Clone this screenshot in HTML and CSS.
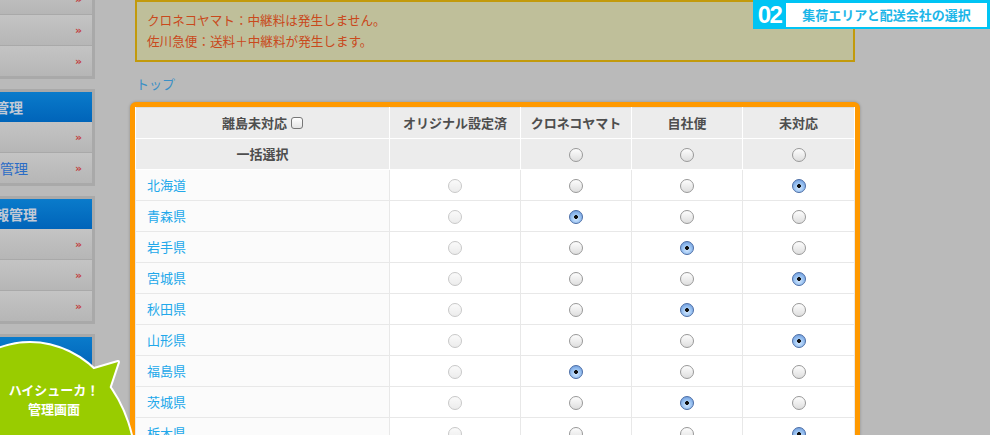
FILE: index.html
```html
<!DOCTYPE html>
<html lang="ja">

<head>
    <meta charset="UTF-8">
    <meta name="viewport" content="width=device-width, initial-scale=1.0">
    <title>配送設定</title>
    <link rel="stylesheet" href="styles.css">
</head>

<body>
    <div id="wrap">
        <div id="side">
            <div class="menu">
                <div class="menu_head">基本情報管理</div>
                <a class="menu_item" href="#">店舗設定<span class="arrow">&raquo;</span></a>
                <a class="menu_item" href="#">配送設定<span class="arrow">&raquo;</span></a>
                <a class="menu_item" href="#">支払設定<span class="arrow">&raquo;</span></a>
            </div>
            <div class="menu">
                <div class="menu_head">商品管理</div>
                <a class="menu_item" href="#">商品登録<span class="arrow">&raquo;</span></a>
                <a class="menu_item current" href="#">カテゴリ管理<span class="arrow">&raquo;</span></a>
            </div>
            <div class="menu">
                <div class="menu_head">顧客情報管理</div>
                <a class="menu_item" href="#">会員一覧<span class="arrow">&raquo;</span></a>
                <a class="menu_item" href="#">会員検索<span class="arrow">&raquo;</span></a>
                <a class="menu_item" href="#">メルマガ<span class="arrow">&raquo;</span></a>
            </div>
            <div class="menu">
                <div class="menu_head">受注管理</div>
            </div>
        </div>

        <div id="main">
            <div class="notice">
                クロネコヤマト：中継料は発生しません。<br />
                佐川急便：送料＋中継料が発生します。
            </div>
            <a class="top_link" href="#">トップ</a>

            <div class="step_box">
                <table class="area_table">
                    <colgroup>
                        <col class="c_pref" />
                        <col class="c_orig" />
                        <col class="c_carrier" />
                        <col class="c_carrier" />
                        <col />
                    </colgroup>
                    <tr>
                        <th>離島未対応 <span class="check"></span></th>
                        <th>オリジナル設定済</th>
                        <th>クロネコヤマト</th>
                        <th>自社便</th>
                        <th>未対応</th>
                    </tr>
                    <tr>
                        <th>一括選択</th>
                        <th></th>
                        <th><input type="radio" name="all" /></th>
                        <th><input type="radio" name="all" /></th>
                        <th><input type="radio" name="all" /></th>
                    </tr>
                    <tr>
                        <td class="pref"><a href="#">北海道</a></td>
                        <td><input type="radio" name="p01" disabled /></td>
                        <td><input type="radio" name="p01" /></td>
                        <td><input type="radio" name="p01" /></td>
                        <td><input type="radio" name="p01" checked /></td>
                    </tr>
                    <tr>
                        <td class="pref"><a href="#">青森県</a></td>
                        <td><input type="radio" name="p02" disabled /></td>
                        <td><input type="radio" name="p02" checked /></td>
                        <td><input type="radio" name="p02" /></td>
                        <td><input type="radio" name="p02" /></td>
                    </tr>
                    <tr>
                        <td class="pref"><a href="#">岩手県</a></td>
                        <td><input type="radio" name="p03" disabled /></td>
                        <td><input type="radio" name="p03" /></td>
                        <td><input type="radio" name="p03" checked /></td>
                        <td><input type="radio" name="p03" /></td>
                    </tr>
                    <tr>
                        <td class="pref"><a href="#">宮城県</a></td>
                        <td><input type="radio" name="p04" disabled /></td>
                        <td><input type="radio" name="p04" /></td>
                        <td><input type="radio" name="p04" /></td>
                        <td><input type="radio" name="p04" checked /></td>
                    </tr>
                    <tr>
                        <td class="pref"><a href="#">秋田県</a></td>
                        <td><input type="radio" name="p05" disabled /></td>
                        <td><input type="radio" name="p05" /></td>
                        <td><input type="radio" name="p05" checked /></td>
                        <td><input type="radio" name="p05" /></td>
                    </tr>
                    <tr>
                        <td class="pref"><a href="#">山形県</a></td>
                        <td><input type="radio" name="p06" disabled /></td>
                        <td><input type="radio" name="p06" /></td>
                        <td><input type="radio" name="p06" /></td>
                        <td><input type="radio" name="p06" checked /></td>
                    </tr>
                    <tr>
                        <td class="pref"><a href="#">福島県</a></td>
                        <td><input type="radio" name="p07" disabled /></td>
                        <td><input type="radio" name="p07" checked /></td>
                        <td><input type="radio" name="p07" /></td>
                        <td><input type="radio" name="p07" /></td>
                    </tr>
                    <tr>
                        <td class="pref"><a href="#">茨城県</a></td>
                        <td><input type="radio" name="p08" disabled /></td>
                        <td><input type="radio" name="p08" /></td>
                        <td><input type="radio" name="p08" checked /></td>
                        <td><input type="radio" name="p08" /></td>
                    </tr>
                    <tr>
                        <td class="pref"><a href="#">栃木県</a></td>
                        <td><input type="radio" name="p09" disabled /></td>
                        <td><input type="radio" name="p09" /></td>
                        <td><input type="radio" name="p09" /></td>
                        <td><input type="radio" name="p09" checked /></td>
                    </tr>
                    <tr>
                        <td class="pref"><a href="#">群馬県</a></td>
                        <td><input type="radio" name="p10" disabled /></td>
                        <td><input type="radio" name="p10" checked /></td>
                        <td><input type="radio" name="p10" /></td>
                        <td><input type="radio" name="p10" /></td>
                    </tr>
                </table>
            </div>
        </div>
    </div>

    <div class="step_badge">
        <span class="step_no">02</span>
        <span class="step_title">集荷エリアと配送会社の選択</span>
    </div>

    <svg class="bubble" width="140" height="105" viewBox="0 330 140 105">
        <ellipse cx="30" cy="470" rx="105" ry="127" fill="none" stroke="#fff" stroke-width="4" />
        <polygon points="84,372 118,362 108,392" fill="none" stroke="#fff" stroke-width="4" stroke-linejoin="round" />
        <ellipse cx="30" cy="470" rx="105" ry="127" fill="#99cc00" />
        <polygon points="84,372 118,362 108,392" fill="#99cc00" />
        <text x="54" y="395" class="bubble_text">ハイシューカ！</text>
        <text x="54" y="414" class="bubble_text">管理画面</text>
    </svg>
</body>

</html>
```

FILE: styles.css
```css
html,
body {
    margin: 0;
    padding: 0;
    overflow: hidden;
}

body {
    background-color: #bababa;
    font-family: "Noto Sans CJK JP", "DejaVu Sans", sans-serif;
    font-size: 13px;
    color: #444;
}

a {
    text-decoration: none;
}

#wrap {
    display: flex;
    align-items: flex-start;
}

/* side menu (scrolled, only the right part is on screen) */
#side {
    width: 200px;
    margin-left: -105px;
    margin-top: -49px;
    flex-shrink: 0;
}

.menu {
    border: 3px solid #a9a9a9;
    margin-bottom: 10px;
    background-color: #bcbcbc;
}

.menu_head {
    height: 30px;
    line-height: 30px;
    text-align: center;
    font-size: 14px;
    font-weight: bold;
    color: #c3cad6;
    background: linear-gradient(#0a7bcb, #0064b9);
}

.menu_item {
    display: flex;
    align-items: center;
    height: 30px;
    padding-left: 46px;
    padding-right: 10px;
    font-size: 14px;
    color: #2a6cc6;
    background: linear-gradient(#c4c4c4, #b6b6b6);
    border-top: 1px solid #a9a9a9;
}

.menu_head + .menu_item {
    border-top: none;
}

.arrow {
    margin-left: auto;
    color: #c2413f;
    font-family: "DejaVu Sans", sans-serif;
    font-size: 11px;
    font-weight: bold;
    line-height: 1;
}

#main {
    margin-left: 35px;
    width: 730px;
    flex-shrink: 0;
}

.notice {
    margin-left: 5px;
    width: 696px;
    padding: 7px 10px 9px 10px;
    border: 2px solid #c29a0c;
    background-color: #bfbf9a;
    color: #c9491c;
    font-size: 12.6px;
    line-height: 21px;
}

.top_link {
    display: block;
    margin: 13px 0 0 6px;
    line-height: 18px;
    color: #3a90c6;
    font-size: 13px;
}

.step_box {
    margin-top: 9px;
    border: 5px solid #ff9900;
    border-radius: 6px;
    background-color: #fff;
    box-shadow: 0 0 3px rgba(0, 0, 0, 0.25);
}

.area_table {
    width: 100%;
    table-layout: fixed;
    border-collapse: collapse;
    border: 1px solid #dcdcdc;
}

.c_pref {
    width: 254px;
}

.c_orig {
    width: 131px;
}

.c_carrier {
    width: 111px;
}

.area_table th,
.area_table td {
    height: 18px;
    padding: 6px 0;
    line-height: 18px;
    text-align: center;
    vertical-align: middle;
}

.area_table th {
    background-color: #ececec;
    border: 1px solid #fff;
    color: #4e4e4e;
    font-size: 13px;
    font-weight: bold;
}

.area_table tr:first-child th {
    border-top: none;
}

.area_table td {
    border: 1px solid #e8e8e8;
}

.area_table td.pref {
    text-align: left;
    padding-left: 11px;
    background-color: #fbfbfb;
}

.pref a {
    color: #22a8ea;
}

.check {
    display: inline-block;
    width: 10px;
    height: 10px;
    margin-left: 1px;
    border: 1px solid #777;
    border-radius: 3px;
    background: linear-gradient(#fff, #e4e4e4);
    vertical-align: -1px;
}

input[type=radio] {
    appearance: none;
    -webkit-appearance: none;
    display: inline-block;
    width: 14px;
    height: 14px;
    margin: 0;
    border: 1px solid #999;
    border-radius: 50%;
    background: linear-gradient(#fdfdfd, #dedede);
    vertical-align: middle;
    box-sizing: border-box;
}

input[type=radio]:checked {
    border-color: #4e6fa6;
    background:
        radial-gradient(circle, #111 0, #111 1.6px, transparent 2.2px),
        radial-gradient(circle at 50% 65%, #d6e9ff 0, #9cc4f2 45%, #5f8fd6 100%);
}

input[type=radio]:disabled {
    border-color: #c9c9c9;
    background: linear-gradient(#fafafa, #ececec);
}

/* tutorial step label */
.step_badge {
    position: absolute;
    top: 0;
    right: 0;
    width: 237px;
    height: 29px;
    display: flex;
    align-items: center;
    background-color: #00c4f4;
}

.step_no {
    width: 33px;
    text-align: center;
    color: #fff;
    font-family: "Liberation Sans", sans-serif;
    font-size: 24px;
    font-weight: bold;
    letter-spacing: -1.5px;
}

.step_title {
    width: 201px;
    height: 24px;
    line-height: 24px;
    background-color: #fff;
    color: #1cb6e8;
    text-align: center;
    font-size: 13px;
    font-weight: bold;
}

.bubble {
    position: absolute;
    left: 0;
    top: 330px;
}

.bubble_text {
    fill: #fff;
    font-family: "Noto Sans CJK JP", sans-serif;
    font-size: 13px;
    font-weight: bold;
    text-anchor: middle;
}
```
